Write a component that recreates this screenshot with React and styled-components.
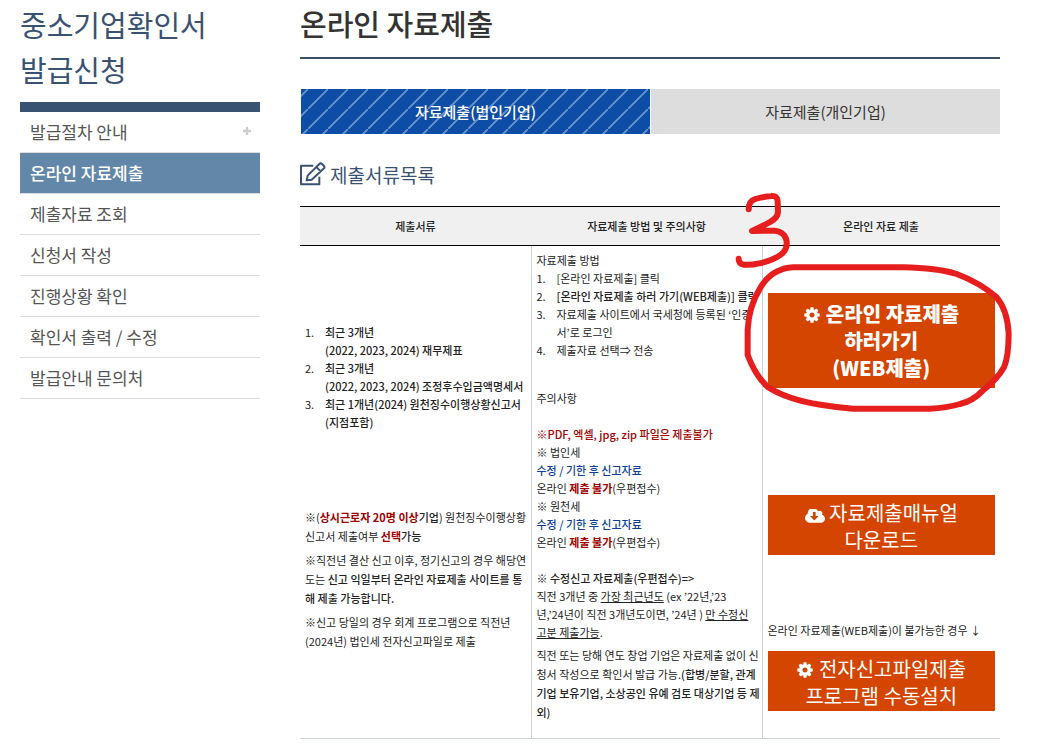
import React, { useState } from "react";
import styled, { createGlobalStyle } from "styled-components";

const GlobalStyle = createGlobalStyle`
  * {
    box-sizing: border-box;
  }

  body {
    margin: 0;
    background-color: #fff;
    color: #333;
    font-family: "Noto Sans CJK KR", "Noto Sans", sans-serif;
  }

  h1, h2, h3, p, ul, ol {
    margin: 0;
    padding: 0;
    list-style: none;
  }

  a {
    color: inherit;
    text-decoration: none;
  }
`;

const Page = styled.div`
  display: flex;
  align-items: flex-start;
  gap: 40px;
  padding: 0 43px 0 20px;
`;

const Sidebar = styled.aside`
  width: 240px;
  flex-shrink: 0;
`;

const SidebarTitle = styled.h1`
  padding: 2px 0 10px;
  border-bottom: 10px solid #3a5272;
  color: #3a5272;
  font-size: 29px;
  font-weight: 400;
  line-height: 45px;
`;

const MenuLink = styled.a`
  display: flex;
  align-items: center;
  justify-content: space-between;
  height: 41px;
  padding: 0 8px 2px 10px;
  border-bottom: 1px solid #ddd;
  background-color: ${(props) => (props.$active ? "#6387a8" : "#fff")};
  color: ${(props) => (props.$active ? "#fff" : "#555")};
  font-size: 17px;
  font-weight: ${(props) => (props.$active ? 500 : 400)};
`;

const Main = styled.main`
  flex: 1;
  min-width: 0;
`;

const PageTitle = styled.h2`
  height: 59px;
  border-bottom: 2px solid #3a506b;
  font-size: 29px;
  font-weight: 500;
  line-height: 46px;
`;

const Tabs = styled.div`
  display: flex;
  gap: 1px;
  margin-top: 30px;
  padding-left: 1px;
`;

const Tab = styled.button`
  flex: 1;
  height: 45px;
  padding: 0;
  border: none;
  background-color: ${(props) => (props.$active ? "#0d4da5" : "#ddd")};
  background-image: ${(props) =>
    props.$active
      ? "linear-gradient(135deg, transparent 45%, #6390cb 48%, #6390cb 52%, transparent 55%)"
      : "none"};
  background-size: 20px 20px;
  background-position: 7px 0;
  color: ${(props) => (props.$active ? "#fff" : "#333")};
  font-family: inherit;
  font-size: 15px;
  font-weight: ${(props) => (props.$active ? 500 : 400)};
  cursor: pointer;
`;

const SectionTitle = styled.h3`
  display: flex;
  align-items: center;
  gap: 4px;
  height: 28px;
  margin: 26px 0 18px;
  color: #3a5272;
  font-size: 19px;
  font-weight: 400;
`;

const TableWrap = styled.div`
  position: relative;
`;

const Table = styled.table`
  width: 100%;
  table-layout: fixed;
  border-collapse: collapse;
  color: #222;
  font-size: 11px;
  line-height: 18px;
`;

const HeadCell = styled.th`
  width: ${(props) => props.$width || "auto"};
  height: 39px;
  padding: 0;
  border-top: 1px solid #000;
  border-bottom: 1px solid #000;
  background-color: #f0f0f0;
  font-weight: 500;
`;

const Cell = styled.td`
  padding: 5px;
  border-bottom: 1px solid #ccd3d9;
  vertical-align: ${(props) => props.$align || "top"};

  & + & {
    border-left: 1px solid #ccd3d9;
  }
`;

const NumberList = styled.ol`
  counter-reset: item;
`;

const NumberItem = styled.li`
  display: flex;
  counter-increment: item;
  font-weight: ${(props) => (props.$strong ? 500 : 400)};

  &::before {
    content: counter(item) ".";
    flex: 0 0 20px;
    font-weight: 400;
  }
`;

const Documents = styled.div`
  display: flex;
  flex-direction: column;
  gap: 72px;
  padding-bottom: 10px;
  white-space: nowrap;
`;

const Guide = styled.div`
  padding-bottom: 11px;
  white-space: nowrap;
`;

const Block = styled.div`
  margin-top: ${(props) => (props.$far ? 30 : 18)}px;
`;

const Note = styled.p`
  margin-top: 5px;
  line-height: 19px;
`;

const Medium = styled.span`
  font-weight: 500;
`;

const Red = styled.span`
  color: #a00000;
  font-weight: ${(props) => (props.$strong ? 700 : 500)};
`;

const Blue = styled.span`
  color: #0b4093;
  font-weight: 500;
`;

const Actions = styled.div`
  padding-top: 42px;
`;

const ActionLink = styled.a`
  display: block;
  padding: ${(props) => (props.$strong ? "7px 0" : "4px 0 2px")};
  background-color: #d34500;
  color: #fff;
  font-size: 20px;
  font-weight: ${(props) => (props.$strong ? 900 : 400)};
  line-height: 27px;
  text-align: center;

  svg {
    vertical-align: -2px;
  }
`;

const ManualArea = styled.div`
  margin: 107px 0 66px;
`;

const Fallback = styled.p`
  margin-bottom: 12px;
  white-space: nowrap;
`;

// 강조 표시는 표 위에 겹쳐서 그림
const Marker = styled.svg`
  position: absolute;
  top: -26px;
  right: -30px;
  pointer-events: none;
`;

const PlusIcon = () => (
  <svg width="10" height="10" viewBox="0 0 10 10" aria-hidden="true">
    <path d="M5 1v8M1 5h8" stroke="#ccc" strokeWidth="2.4" />
  </svg>
);

const EditIcon = () => (
  <svg
    width="26"
    height="24"
    viewBox="2 0 78 72"
    fill="none"
    stroke="#3a5272"
    strokeWidth="6"
    strokeLinejoin="round"
    aria-hidden="true"
  >
    <path d="M42 11H5v56h55V44" />
    <path d="M22 55l3-14L60 6q4-4 8 0l6 6q3 4 0 7L37 53zM51 15l13 13" />
  </svg>
);

const CogIcon = () => (
  <svg width="18" height="18" viewBox="0 0 1792 1792" fill="#fff" aria-hidden="true">
    <path d="M1152 896q0-106-75-181t-181-75-181 75-75 181 75 181 181 75 181-75 75-181zm512-109v222q0 12-8 23t-20 13l-185 28q-19 54-39 91 35 50 107 138 10 12 10 25t-9 23q-27 37-99 108t-94 71q-12 0-26-9l-138-108q-44 23-91 38-16 136-29 186-7 28-36 28h-222q-14 0-24.5-8.500t-11.500-21.500l-28-184q-49-16-90-37l-141 107q-10 9-25 9-14 0-25-11-126-114-165-168-7-10-7-23 0-12 8-23 15-21 51-66.500t54-70.500q-27-50-41-99l-183-27q-13-2-21-12.500t-8-23.500v-222q0-12 8-23t19-13l186-28q14-46 39-92-40-57-107-138-10-12-10-24 0-10 9-23 26-36 98.500-107.500t94.500-71.500q13 0 26 10l138 107q44-23 91-38 16-136 29-186 7-28 36-28h222q14 0 24.500 8.500t11.500 21.500l28 184q49 16 90 37l142-107q9-9 24-9 13 0 25 10 129 119 165 170 7 8 7 22 0 12-8 23-15 21-51 66.500t-54 70.500q26 50 41 98l183 28q13 2 21 12.500t8 23.500z" />
  </svg>
);

const CloudIcon = () => (
  <svg width="20" height="14" viewBox="-64 256 1920 1280" fill="#fff" aria-hidden="true">
    <path d="M1216 928q0-14-9-23t-23-9h-224v-352q0-13-9.500-22.500t-22.500-9.500h-192q-13 0-22.500 9.500t-9.500 22.500v352h-224q-13 0-22.500 9.500t-9.500 22.500q0 14 9 23l352 352q9 9 23 9t23-9l351-351q10-12 10-24zm640 224q0 159-112.500 271.500t-271.500 112.500h-1088q-185 0-316.500-131.500t-131.500-316.500q0-130 70-240t188-165q-2-30-2-43 0-212 150-362t362-150q156 0 285.500 87t188.500 231q71-62 166-62 106 0 181 75t75 181q0 76-41 138 130 31 213.500 135.500t83.500 238.500z" />
  </svg>
);

const menus = [
  { label: "발급절차 안내", expandable: true },
  { label: "온라인 자료제출", active: true },
  { label: "제출자료 조회" },
  { label: "신청서 작성" },
  { label: "진행상황 확인" },
  { label: "확인서 출력 / 수정" },
  { label: "발급안내 문의처" },
];

const tabs = ["자료제출(법인기업)", "자료제출(개인기업)"];

const App = () => {
  const [currentTab, setCurrentTab] = useState(0);

  return (
    <>
      <GlobalStyle />
      <Page>
        <Sidebar>
          <SidebarTitle>
            중소기업확인서
            <br />
            발급신청
          </SidebarTitle>
          <nav>
            <ul>
              {menus.map((menu) => (
                <li key={menu.label}>
                  <MenuLink href="#" $active={menu.active}>
                    {menu.label}
                    {menu.expandable && <PlusIcon />}
                  </MenuLink>
                </li>
              ))}
            </ul>
          </nav>
        </Sidebar>

        <Main>
          <PageTitle>온라인 자료제출</PageTitle>
          <Tabs>
            {tabs.map((tab, index) => (
              <Tab
                key={tab}
                type="button"
                $active={currentTab === index}
                onClick={() => setCurrentTab(index)}
              >
                {tab}
              </Tab>
            ))}
          </Tabs>

          <SectionTitle>
            <EditIcon />
            제출서류목록
          </SectionTitle>

          <TableWrap>
            <Table>
              <thead>
                <tr>
                  <HeadCell $width="33%">제출서류</HeadCell>
                  <HeadCell $width="33%">자료제출 방법 및 주의사항</HeadCell>
                  <HeadCell>온라인 자료 제출</HeadCell>
                </tr>
              </thead>
              <tbody>
                <tr>
                  <Cell $align="middle">
                    <Documents>
                      <NumberList>
                        <NumberItem $strong>
                          <span>
                            최근 3개년
                            <br />
                            (2022, 2023, 2024) 재무제표
                          </span>
                        </NumberItem>
                        <NumberItem $strong>
                          <span>
                            최근 3개년
                            <br />
                            (2022, 2023, 2024) 조정후수입금액명세서
                          </span>
                        </NumberItem>
                        <NumberItem $strong>
                          <span>
                            최근 1개년(2024) 원천징수이행상황신고서
                            <br />
                            (지점포함)
                          </span>
                        </NumberItem>
                      </NumberList>
                      <div>
                        <Note>
                          ※(<Red $strong>상시근로자 20명 이상</Red>
                          <Medium>기업</Medium>) 원천징수이행상황
                          <br />
                          신고서 제출여부 <Red $strong>선택</Red>
                          <Medium>가능</Medium>
                        </Note>
                        <Note>
                          ※직전년 결산 신고 이후, 정기신고의 경우 해당연
                          <br />
                          도는{" "}
                          <Medium>
                            신고 익일부터 온라인 자료제출 사이트를 통
                            <br />해 제출 가능합니다.
                          </Medium>
                        </Note>
                        <Note>
                          ※신고 당일의 경우 회계 프로그램으로 직전년
                          <br />
                          (2024년) 법인세 전자신고파일로 제출
                        </Note>
                      </div>
                    </Documents>
                  </Cell>

                  <Cell>
                    <Guide>
                      <p>자료제출 방법</p>
                      <NumberList>
                        <NumberItem>[온라인 자료제출] 클릭</NumberItem>
                        <NumberItem $strong>
                          [온라인 자료제출 하러 가기(WEB제출)] 클릭
                        </NumberItem>
                        <NumberItem>
                          <span>
                            자료제출 사이트에서 국세청에 등록된 ‘인증
                            <br />
                            서’로 로그인
                          </span>
                        </NumberItem>
                        <NumberItem>제출자료 선택⇒ 전송</NumberItem>
                      </NumberList>
                      <Block $far>주의사항</Block>
                      <Block>
                        <p>
                          <Red>※PDF, 엑셀, jpg, zip 파일은 제출불가</Red>
                        </p>
                        <p>※ 법인세</p>
                        <p>
                          <Blue>수정 / 기한 후 신고자료</Blue>
                        </p>
                        <p>
                          온라인 <Red $strong>제출 불가</Red>(우편접수)
                        </p>
                        <p>※ 원천세</p>
                        <p>
                          <Blue>수정 / 기한 후 신고자료</Blue>
                        </p>
                        <p>
                          온라인 <Red $strong>제출 불가</Red>(우편접수)
                        </p>
                      </Block>
                      <Block>
                        <p>
                          <Medium>※ 수정신고 자료제출(우편접수)=&gt;</Medium>
                        </p>
                        <p>
                          직전 3개년 중 <u>가장 최근년도</u> (ex ’22년,’23
                          <br />
                          년,’24년이 직전 3개년도이면, ’24년 ){" "}
                          <u>
                            만 수정신
                            <br />
                            고분 제출가능
                          </u>
                          .
                        </p>
                      </Block>
                      <Note>
                        직전 또는 당해 연도 창업 기업은 자료제출 없이 신
                        <br />
                        청서 작성으로 확인서 발급 가능.
                        <Medium>
                          (합병/분할, 관계
                          <br />
                          기업 보유기업, 소상공인 유예 검토 대상기업 등 제
                          <br />
                          외)
                        </Medium>
                      </Note>
                    </Guide>
                  </Cell>

                  <Cell>
                    <Actions>
                      <ActionLink href="#" $strong>
                        <CogIcon /> 온라인 자료제출
                        <br />
                        하러가기
                        <br />
                        (WEB제출)
                      </ActionLink>
                      <ManualArea>
                        <ActionLink href="#">
                          <CloudIcon /> 자료제출매뉴얼
                          <br />
                          다운로드
                        </ActionLink>
                      </ManualArea>
                      <Fallback>
                        온라인 자료제출(WEB제출)이 불가능한 경우 ↓
                      </Fallback>
                      <ActionLink href="#">
                        <CogIcon /> 전자신고파일제출
                        <br />
                        프로그램 수동설치
                      </ActionLink>
                    </Actions>
                  </Cell>
                </tr>
              </tbody>
            </Table>

            <Marker
              width="300"
              height="240"
              viewBox="0 0 900 720"
              fill="none"
              stroke="#e61e1e"
              strokeWidth="18"
              strokeLinecap="round"
              strokeLinejoin="round"
              aria-hidden="true"
            >
              <path d="M56 88Q56 63 76 57Q100 50 124 48Q142 46 143 65L144 96Q143 114 120 126Q95 140 66 153L134 152Q160 154 168 176Q176 204 155 222Q130 242 88 250Q60 256 42 254Q26 252 26 236" />
              <path d="M190 262H520Q620 264 680 282Q750 308 800 352Q832 390 836 460Q836 530 822 562Q800 600 758 632Q728 664 690 672Q650 684 600 686H370Q320 682 272 674Q170 658 112 620Q75 585 53 525V450Q56 380 90 325Q125 265 190 262Z" />
            </Marker>
          </TableWrap>
        </Main>
      </Page>
    </>
  );
};

export default App;
